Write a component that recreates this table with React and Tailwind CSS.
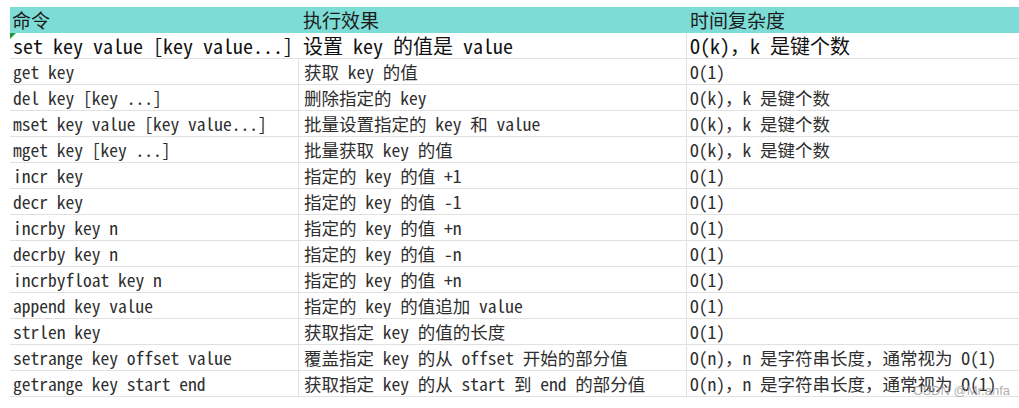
const rows = [
  ['get key', '获取 key 的值', 'O(1)'],
  ['del key [key ...]', '删除指定的 key', 'O(k)，k 是键个数'],
  ['mset key value [key value...]', '批量设置指定的 key 和 value', 'O(k)，k 是键个数'],
  ['mget key [key ...]', '批量获取 key 的值', 'O(k)，k 是键个数'],
  ['incr key', '指定的 key 的值 +1', 'O(1)'],
  ['decr key', '指定的 key 的值 -1', 'O(1)'],
  ['incrby key n', '指定的 key 的值 +n', 'O(1)'],
  ['decrby key n', '指定的 key 的值 -n', 'O(1)'],
  ['incrbyfloat key n', '指定的 key 的值 +n', 'O(1)'],
  ['append key value', '指定的 key 的值追加 value', 'O(1)'],
  ['strlen key', '获取指定 key 的值的长度', 'O(1)'],
  ['setrange key offset value', '覆盖指定 key 的从 offset 开始的部分值', 'O(n)，n 是字符串长度，通常视为 O(1)'],
  ['getrange key start end', '获取指定 key 的从 start 到 end 的部分值', 'O(n)，n 是字符串长度，通常视为 O(1)'],
];

export default function App() {
  return (
    <div className="relative w-[1019px] h-[408px] bg-white pt-[7px] pl-[10px] font-['Noto_Sans_Mono_CJK_SC','Liberation_Mono',monospace] overflow-hidden">
      {/* header */}
      <div className="grid grid-cols-[288px_388px_1fr] h-[26px] bg-[#7ddcd6] text-[#1c1c1c] text-[19px] font-['Noto_Sans_CJK_SC',sans-serif] leading-[26px]">
        <div className="pl-[2px]">命令</div>
        <div className="pl-[5px]">执行效果</div>
        <div className="pl-[4px]">时间复杂度</div>
      </div>

      {/* first row, larger text */}
      <div className="relative grid grid-cols-[288px_388px_1fr] h-[26px] border-b border-[#e1e1e1] text-[20px] leading-[25px] text-[#111]">
        <div className="absolute left-0 top-0 w-0 h-0 border-t-[6px] border-r-[6px] border-t-[#1f9a3f] border-r-transparent" />
        <div className="pl-[3px] whitespace-nowrap">set key value [key value...]</div>
        <div className="pl-[5px] whitespace-nowrap">设置 key 的值是 value</div>
        <div className="pl-[3px] border-l border-[#e1e1e1] whitespace-nowrap">O(k)，k 是键个数</div>
      </div>

      {rows.map(([cmd, effect, cost], i) => (
        <div
          key={i}
          className="grid grid-cols-[288px_388px_1fr] h-[26px] border-b border-[#e1e1e1] text-[17.5px] leading-[25px] text-[#2e2e2e]"
        >
          <div className="pl-[3px] whitespace-nowrap">{cmd}</div>
          <div className="pl-[5px] border-l border-[#e1e1e1] whitespace-nowrap">{effect}</div>
          <div className="pl-[3px] border-l border-[#e1e1e1] whitespace-nowrap">{cost}</div>
        </div>
      ))}

      {/* watermark */}
      <div className="absolute left-[913px] top-[381px] text-[13px] text-[#9a9a9a]/80 font-['Liberation_Sans',sans-serif]">
        CSDN @Mr.anfa
      </div>
    </div>
  );
}
